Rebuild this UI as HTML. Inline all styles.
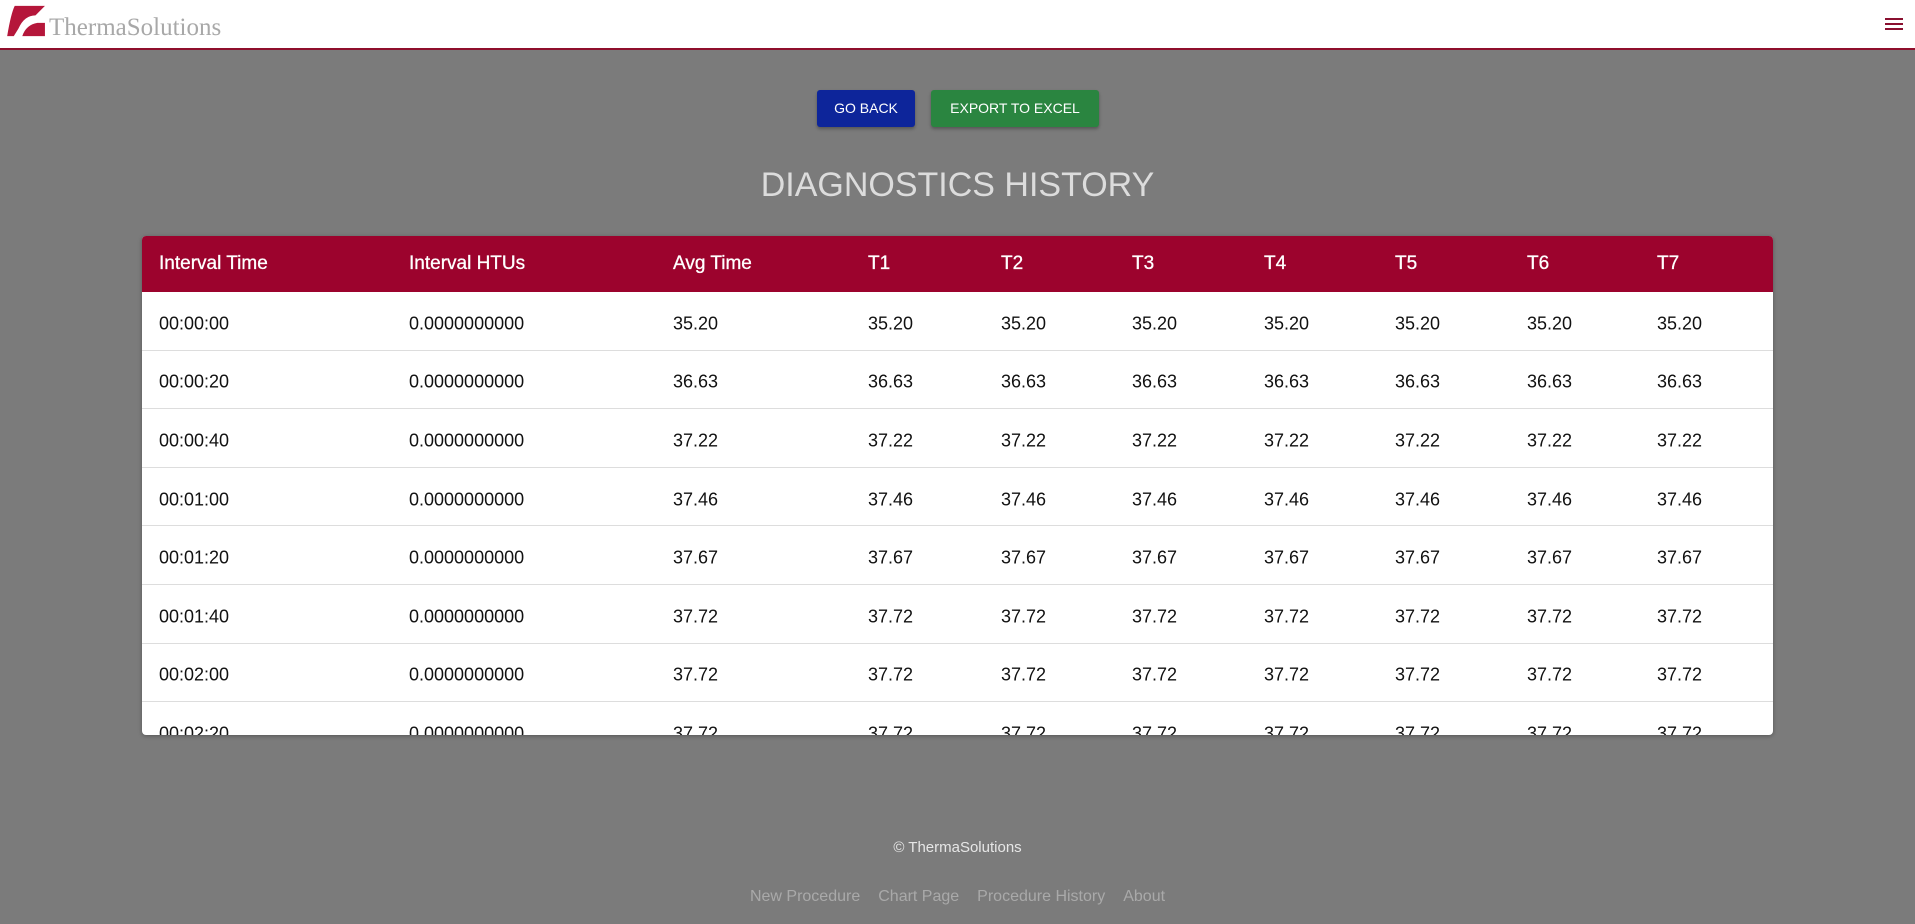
<!DOCTYPE html>
<html><head><meta charset="utf-8"><style>
*{margin:0;padding:0;box-sizing:border-box}
body{width:1915px;height:924px;background:#7b7b7b;font-family:"Liberation Sans",Arial,sans-serif;position:relative;overflow:hidden}
.hdr{position:absolute;left:0;top:0;width:1915px;height:50px;background:#fff;border-bottom:2px solid #8f0f2c}
.logo{position:absolute;left:49px;top:14px;font-family:"Liberation Serif",serif;font-size:25px;color:#a8a8a8}
.burger{position:absolute;left:1885px;top:18px;width:18px}
.burger i{display:block;height:2px;background:#8a1030;margin-bottom:3px}
.btn{position:absolute;top:90px;height:37px;color:#fff;font-size:14px;line-height:37px;text-align:center;border-radius:3px;box-shadow:0 2px 3px rgba(0,0,0,.3)}
h1{position:absolute;left:0;width:1915px;top:166px;text-align:center;font-weight:normal;font-size:34px;color:#dcdcdc}
.tbl{position:absolute;left:142px;top:236px;width:1631px;height:499px;background:#fff;border-radius:4px;overflow:hidden;box-shadow:0 1px 4px rgba(0,0,0,.3)}
.th{position:absolute;left:0;top:0;width:100%;height:56px;background:#9c032d;color:#fff;font-size:19px;-webkit-text-stroke:0.3px #fff}
.row{position:absolute;left:0;width:100%;height:58.6px;border-bottom:1px solid #ddd;font-size:18px;color:#111}
.row .c{margin-top:3px}
.c{position:absolute;top:50%;transform:translateY(-50%);white-space:nowrap}
.foot{position:absolute;width:1915px;text-align:center;left:0}
</style></head><body>
<div class="hdr">
<svg style="position:absolute;left:7px;top:4px" width="40" height="34" viewBox="0 0 42 36"><path d="M8 2 H40 L30 12 Q18 12 12 26 L7 34 H0 Q4 10 8 2Z" fill="#b5163a"/><path d="M16 34 Q20 22 32 20 H40 V34Z" fill="#b5163a"/></svg>
<div class="logo">ThermaSolutions</div>
<div class="burger"><i></i><i></i><i></i></div>
</div>
<div class="btn" style="left:817px;width:98px;background:#0d259a">GO BACK</div>
<div class="btn" style="left:931px;width:168px;background:#2a8540">EXPORT TO EXCEL</div>
<h1>DIAGNOSTICS HISTORY</h1>
<div class="tbl">
<div class="th">
<span class="c" style="left:17px">Interval Time</span><span class="c" style="left:267px">Interval HTUs</span><span class="c" style="left:531px">Avg Time</span><span class="c" style="left:726px">T1</span><span class="c" style="left:859px">T2</span><span class="c" style="left:990px">T3</span><span class="c" style="left:1122px">T4</span><span class="c" style="left:1253px">T5</span><span class="c" style="left:1385px">T6</span><span class="c" style="left:1515px">T7</span>
</div>
<div id="rows"></div>
</div>
<div class="foot" style="top:839px;font-size:15px;color:#e6e6e6">© ThermaSolutions</div>
<div class="foot" style="top:888px;font-size:16px;color:#a9a9a9"><span style="margin-right:18px">New Procedure</span><span style="margin-right:18px">Chart Page</span><span style="margin-right:18px">Procedure History</span><span>About</span></div>
<script>
var t=["00:00:00","00:00:20","00:00:40","00:01:00","00:01:20","00:01:40","00:02:00","00:02:20"],v=["35.20","36.63","37.22","37.46","37.67","37.72","37.72","37.72"],x=[17,267,531,726,859,990,1122,1253,1385,1515],h="";
for(var i=0;i<8;i++){h+='<div class="row" style="top:'+(56+i*58.6)+'px">';var d=[t[i],"0.0000000000"];for(var k=0;k<8;k++)d.push(v[i]);for(var k=0;k<10;k++)h+='<span class="c" style="left:'+x[k]+'px">'+d[k]+'</span>';h+='</div>';}
document.getElementById("rows").innerHTML=h;
</script>
</body></html>
